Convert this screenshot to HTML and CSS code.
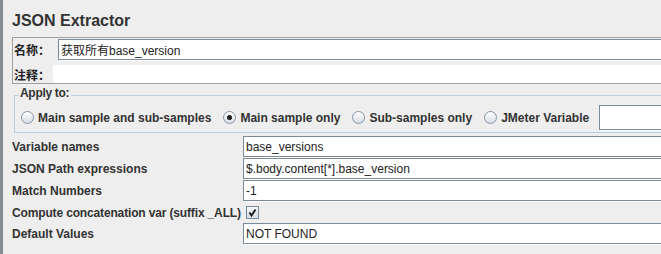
FILE: index.html
```html
<!DOCTYPE html>
<html lang="en">
<head>
  <meta charset="UTF-8">
  <title>JSON Extractor</title>
  <link rel="stylesheet" href="styles.css">
</head>
<body>

  <div class="editor">
    <h1 class="title">JSON Extractor</h1>

    <div class="name-box">
      <div class="name-row">
        <label class="cjk-label name-label">名称：</label>
        <input type="text" class="field" value="获取所有base_version">
      </div>
      <div class="name-row comment-row">
        <label class="cjk-label comment-label">注释：</label>
        <textarea class="comment"></textarea>
      </div>
    </div>

    <fieldset class="apply">
      <legend>Apply to:</legend>
      <div class="radio-row">
        <label class="radio"><span class="dot"></span>Main sample and sub-samples</label>
        <label class="radio"><span class="dot checked"></span>Main sample only</label>
        <label class="radio"><span class="dot"></span>Sub-samples only</label>
        <label class="radio"><span class="dot"></span>JMeter Variable</label>
        <input type="text" class="field var-field" value="">
      </div>
    </fieldset>

    <div class="form">
      <label>Variable names</label>
      <input type="text" class="field" value="base_versions">

      <label>JSON Path expressions</label>
      <input type="text" class="field" value="$.body.content[*].base_version">

      <label>Match Numbers</label>
      <input type="text" class="field" value="-1">

      <label class="tight">Compute concatenation var (suffix _ALL)</label>
      <span class="check">
        <svg width="11" height="11" viewBox="0 0 11 11">
          <path d="M2.5 5.5 L4.5 8.5 L8.5 2.5" fill="none" stroke="#1e1e1e" stroke-width="2"/>
        </svg>
      </span>

      <label>Default Values</label>
      <input type="text" class="field" value="NOT FOUND">
    </div>
  </div>

</body>
</html>
```

FILE: styles.css
```css
html, body {
  margin: 0;
  height: 100%;
  overflow: hidden;
  background-color: #eeeeee;
}

body {
  font-family: "Liberation Sans", Arial, "Noto Sans CJK SC", sans-serif;
  font-size: 12px;
  color: #333333;
  border-left: 3px solid #858c94;
}

.editor {
  width: 720px;
  padding-left: 9px;
}

.title {
  margin: 0;
  padding-top: 11px;
  font-size: 16px;
  line-height: 19px;
  font-weight: bold;
}

/* text fields, Metal look */
.field {
  box-sizing: border-box;
  height: 21px;
  margin: 0;
  padding: 0 2px;
  border: 1px solid #7a8a99;
  box-shadow: 1px 1px 0 #ffffff;
  background: #ffffff;
  font-family: "Liberation Sans", Arial, "Noto Sans CJK SC", sans-serif;
  font-size: 12px;
  color: #222222;
  outline: none;
}

.name-box {
  margin-top: 7px;
  border: 1px solid #a0a0a0;
  border-right: none;
}

.name-row {
  display: flex;
  align-items: center;
  padding: 1px 0 0 1px;
}

.name-row .field {
  flex: 1;
}

.cjk-label {
  font-family: "Noto Sans CJK SC", sans-serif;
  font-weight: bold;
  font-size: 12px;
  color: #222222;
}

.name-label {
  flex: 0 0 44px;
}

.comment-row {
  margin-top: 5px;
  padding-top: 0;
}

.comment-label {
  flex: 0 0 39px;
}

.comment {
  flex: 1;
  display: block;
  height: 18px;
  margin: 0;
  padding: 0;
  border: none;
  resize: none;
  background: #ffffff;
  font-family: "Liberation Sans", Arial, sans-serif;
  font-size: 12px;
  outline: none;
}

.apply {
  margin: 2px 0 0 2px;
  padding: 1px 0 2px 4px;
  border: 1px solid #b8cfe5;
  border-right: none;
}

.apply legend {
  padding: 0 2px 4px 1px;
  font-size: 12px;
  line-height: 14px;
  font-weight: bold;
  letter-spacing: -0.3px;
}

.radio-row {
  display: flex;
  align-items: center;
  gap: 12px;
  padding-left: 2px;
}

.radio {
  display: flex;
  align-items: center;
  gap: 4px;
  font-weight: bold;
  white-space: nowrap;
}

.dot {
  box-sizing: border-box;
  width: 13px;
  height: 13px;
  border: 1px solid #8595a6;
  border-radius: 50%;
  background: linear-gradient(#ffffff, #d6dde5);
  display: flex;
  align-items: center;
  justify-content: center;
}

.dot.checked::after {
  content: "";
  width: 5px;
  height: 5px;
  border-radius: 50%;
  background: #1e1e1e;
}

.var-field {
  flex: 1;
  height: 25px;
  margin-left: -2px;
}

.form {
  margin-top: 3px;
  display: grid;
  grid-template-columns: 231px 1fr;
  grid-template-rows: 22px 22px 22px 21px 22px;
  align-items: start;
}

.form label {
  font-weight: bold;
  align-self: center;
  white-space: nowrap;
}

.form .tight {
  letter-spacing: -0.15px;
}

.check {
  box-sizing: border-box;
  width: 13px;
  height: 13px;
  margin: 4px 0 0 3px;
  border: 1px solid #7a8a99;
  background: linear-gradient(#f4f7fa, #d6dde5);
  display: flex;
  align-items: center;
  justify-content: center;
}

.check svg {
  display: block;
}
```
